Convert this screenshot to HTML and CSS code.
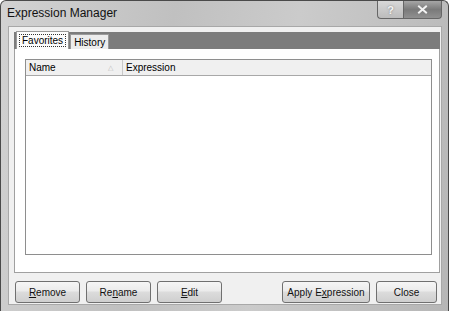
FILE: index.html
```html
<!DOCTYPE html>
<html lang="en">
  <head>
    <meta charset="UTF-8" />
    <title>Expression Manager</title>
    <link rel="stylesheet" href="styles.css">
  </head>
  <body>
    <div class="window">
      <div class="titlebar">
        <span class="title">Expression Manager</span>
        <div class="caption">
          <div class="cap-btn help">?</div>
          <div class="cap-btn close">
            <svg width="11" height="9" viewBox="0 0 11 9">
              <path d="M2 1.5 L9 7.5 M9 1.5 L2 7.5" stroke="#f2f2f2" stroke-width="2" stroke-linecap="square" />
            </svg>
          </div>
        </div>
      </div>

      <div class="client">
        <div class="tabs">
          <div class="tab active"><span class="focus">Favorites</span></div>
          <div class="tab">History</div>
        </div>

        <div class="panel">
          <div class="list">
            <div class="list-header">
              <div class="col col-name">Name<span class="sort">&#9651;</span></div>
              <div class="col col-expr">Expression</div>
            </div>
          </div>
        </div>

        <div class="buttons">
          <button class="btn"><u>R</u>emove</button>
          <button class="btn">Re<u>n</u>ame</button>
          <button class="btn"><u>E</u>dit</button>
          <button class="btn btn-apply">Apply E<u>x</u>pression</button>
          <button class="btn btn-close">Close</button>
        </div>
      </div>
    </div>
  </body>
</html>
```

FILE: styles.css
```css
body {
  margin: 0;
  font-family: "Liberation Sans", Arial, sans-serif;
  font-size: 10px;
  color: #000;
  background: #fff;
}

.window {
  width: 449px;
  height: 311px;
  box-sizing: border-box;
  border: 1px solid #4a4a4a;
  border-bottom: none;
  border-radius: 6px 6px 0 0;
  background: linear-gradient(100deg, #d2d2d2 0%, #c0c0c0 35%, #cbcbcb 60%, #b6b6b6 100%);
  display: flex;
  flex-direction: column;
  overflow: hidden;
}

.titlebar {
  height: 26px;
  display: flex;
  align-items: flex-start;
  padding-left: 6px;
}

.title {
  font-size: 12px;
  line-height: 25px;
  color: #111;
}

.caption {
  margin-left: auto;
  margin-right: 6px;
  display: flex;
}

.cap-btn {
  height: 17px;
  border: 1px solid #666;
  border-top: none;
  display: flex;
  align-items: center;
  justify-content: center;
}

.help {
  width: 25px;
  border-radius: 0 0 0 4px;
  border-right: none;
  background: linear-gradient(#d8d8d8, #bcbcbc);
  color: #f4f4f4;
  font-weight: bold;
  font-size: 11px;
  text-shadow: 0 0 2px #777;
}

.close {
  width: 37px;
  border-radius: 0 0 4px 0;
  background: linear-gradient(#a6a6a6, #7a7a7a 50%, #909090);
}

.client {
  flex: 1;
  margin: 0 6px 6px 7px;
  background: #f0f0f0;
  border: 1px solid #a8a8a8;
  display: flex;
  flex-direction: column;
  padding: 5px 1px 1px 5px;
}

.tabs {
  height: 17px;
  background: #7c7c7c;
  display: flex;
  align-items: flex-end;
  padding-left: 2px;
}

.tab {
  height: 14px;
  line-height: 15px;
  padding: 0 3px;
  background: #ececec;
  border: 1px solid #9a9a9a;
  border-bottom: none;
}

.tab.active {
  height: 17px;
  line-height: 18px;
  background: #fcfcfc;
  padding: 0 2px;
  margin-right: 1px;
}

.focus {
  border: 1px dotted #333;
  padding: 0 2px;
}

.panel {
  height: 224px;
  box-sizing: border-box;
  background: #fff;
  border: 1px solid #a0a0a0;
  border-top: none;
  padding: 10px 7px 17px 10px;
}

.list {
  height: 100%;
  box-sizing: border-box;
  border: 1px solid #8e8e8e;
  background: #fff;
}

.list-header {
  height: 15px;
  background: #f0f0f0;
  border-bottom: 1px solid #a8a8a8;
  display: flex;
  line-height: 15px;
}

.col {
  padding-left: 3px;
}

.col-name {
  width: 93px;
  border-right: 1px solid #c8c8c8;
  position: relative;
}

.sort {
  position: absolute;
  right: 9px;
  top: 0;
  font-size: 7px;
  color: #bbb;
}

.buttons {
  margin-top: 8px;
  height: 22px;
  display: flex;
  padding-left: 1px;
  padding-right: 3px;
}

.btn {
  height: 22px;
  width: 65px;
  margin-right: 6px;
  padding: 0;
  font-family: "Liberation Sans", Arial, sans-serif;
  font-size: 10px;
  color: #111;
  border: 1px solid #707070;
  border-radius: 3px;
  background: linear-gradient(#f6f6f6 0%, #ebebeb 45%, #dcdcdc 50%, #cfcfcf 100%);
}

.btn-apply {
  margin-left: auto;
  width: 88px;
}

.btn-close {
  width: 61px;
  margin-right: 0;
}
```
